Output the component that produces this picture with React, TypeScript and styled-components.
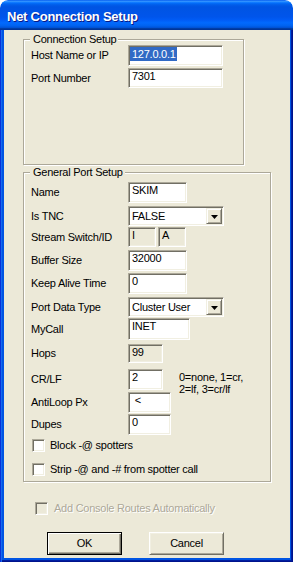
import React from "react";
import styled, { createGlobalStyle, css } from "styled-components";

const Global = createGlobalStyle`
  html, body { margin: 0; padding: 0; background: #ffffff; }
  body { font-family: "Liberation Sans", Arial, sans-serif; }
`;

const UI_FONT = `"Liberation Sans", Arial, sans-serif`;

const Window = styled.div`
  width: 293px;
  height: 562px;
  display: flex;
  flex-direction: column;
  overflow: hidden;
  border-radius: 8px 8px 0 0;
`;

const TitleBar = styled.div`
  height: 30px;
  flex-shrink: 0;
  box-sizing: border-box;
  border-radius: 8px 8px 0 0;
  padding: 9px 0 0 7px;
  background: linear-gradient(
    180deg,
    #0058ee 0%,
    #3593ff 4%,
    #288eff 6%,
    #127dff 8%,
    #036ffc 10%,
    #0262ee 14%,
    #0057e5 20%,
    #0054e3 24%,
    #0055eb 56%,
    #005bf5 66%,
    #026afe 76%,
    #0062ef 86%,
    #0052d6 92%,
    #0040ab 94%,
    #003092 100%
  );
  color: #ffffff;
  font: bold 13px/15px ${UI_FONT};
  letter-spacing: -0.25px;
  text-shadow: 1px 1px #0a1883;
  white-space: nowrap;
`;

const Frame = styled.div`
  flex: 1;
  display: flex;
  padding: 0 3px 4px 4px;
  background: #0054e3;
  box-shadow: inset 1px 0 #0831d9, inset 2px 0 #166aee, inset -1px -1px #00138c,
    inset -2px -2px #001ea0;
`;

const Body = styled.div`
  flex: 1;
  display: flex;
  flex-direction: column;
  align-items: flex-start;
  background: #ece9d8;
  padding: 9px 0 0 19px;
  color: #000000;
  font: 11px/13px ${UI_FONT};
  letter-spacing: -0.25px;
`;

const GroupBox = styled.div<{ $w: number; $h: number; $pt: number; $mt?: number }>`
  position: relative;
  box-sizing: border-box;
  width: ${(p) => p.$w}px;
  height: ${(p) => p.$h}px;
  margin-top: ${(p) => p.$mt ?? 0}px;
  padding: ${(p) => p.$pt}px 0 0 7px;
  border: 1px solid #aca899;
  box-shadow: inset 1px 1px #ffffff, 1px 1px #ffffff;
  display: flex;
  flex-direction: column;
`;

const Legend = styled.span`
  position: absolute;
  top: -7px;
  left: 6px;
  padding: 0 2px 0 3px;
  background: #ece9d8;
  line-height: 13px;
  white-space: nowrap;
`;

const Row = styled.div<{ $h: number; $mt?: number }>`
  display: flex;
  align-items: center;
  height: ${(p) => p.$h}px;
  margin-top: ${(p) => p.$mt ?? 0}px;
`;

const Label = styled.div`
  width: 97px;
  flex-shrink: 0;
  white-space: nowrap;
`;

const sunken = css`
  box-sizing: border-box;
  border: 1px solid;
  border-color: #aca899 #ffffff #ffffff #aca899;
  box-shadow: inset 1px 1px #716f64, inset -1px -1px #f1efe2;
`;

const raised = css`
  box-sizing: border-box;
  border: 1px solid;
  border-color: #f1efe2 #716f64 #716f64 #f1efe2;
  box-shadow: inset 1px 1px #ffffff, inset -1px -1px #aca899;
  background: #ece9d8;
`;

const Field = styled.div<{ $w: number; $disabled?: boolean }>`
  ${sunken}
  width: ${(p) => p.$w}px;
  height: 100%;
  flex-shrink: 0;
  padding: 1px 1px 1px 3px;
  background: ${(p) => (p.$disabled ? "#ece9d8" : "#ffffff")};
  white-space: nowrap;
  overflow: hidden;
  line-height: 13px;
`;

const Selected = styled.span`
  display: inline-block;
  margin-left: -2px;
  padding: 0 1px 0 2px;
  line-height: 14px;
  background: #316ac5;
  color: #ffffff;
`;

const FieldPair = styled.div`
  display: flex;
  gap: 2px;
  height: 100%;
`;

const Combo = styled.div<{ $w: number }>`
  ${sunken}
  width: ${(p) => p.$w}px;
  height: 100%;
  padding: 1px;
  background: #ffffff;
  display: flex;
  align-items: center;
`;

const ComboText = styled.div`
  flex: 1;
  padding-left: 2px;
  white-space: nowrap;
`;

const DropButton = styled.div`
  ${raised}
  width: 16px;
  height: 16px;
  display: flex;
  align-items: center;
  justify-content: center;
  padding-top: 1px;
`;

const Help = styled.div`
  align-self: flex-start;
  margin: 2px 0 0 16px;
  line-height: 12px;
  white-space: nowrap;
`;

const CheckRow = styled.div<{ $mt?: number; $ml: number; $disabled?: boolean }>`
  display: flex;
  align-items: center;
  height: 13px;
  margin-top: ${(p) => p.$mt ?? 0}px;
  margin-left: ${(p) => p.$ml}px;
  gap: ${(p) => (p.$disabled ? 6 : 5)}px;
  white-space: nowrap;
  color: ${(p) => (p.$disabled ? "#aca899" : "#000000")};
  text-shadow: ${(p) => (p.$disabled ? "1px 1px #ffffff" : "none")};
`;

const CheckBox = styled.div<{ $disabled?: boolean }>`
  ${sunken}
  width: 13px;
  height: 13px;
  flex-shrink: 0;
  background: ${(p) => (p.$disabled ? "#ece9d8" : "#ffffff")};
`;

const ButtonRow = styled.div`
  display: flex;
  gap: 27px;
  margin: 17px 0 0 24px;
`;

const Button = styled.button<{ $default?: boolean }>`
  width: 75px;
  height: 23px;
  box-sizing: border-box;
  margin: 0;
  padding: 0;
  background: #ece9d8;
  color: #000000;
  font: 11px/13px ${UI_FONT};
  letter-spacing: -0.25px;
  display: flex;
  align-items: center;
  justify-content: center;
  ${(p) =>
    p.$default
      ? css`
          border: 1px solid #000000;
          box-shadow: inset 1px 1px #ffffff, inset -1px -1px #716f64,
            inset -2px -2px #aca899;
        `
      : css`
          border: 1px solid;
          border-color: #ffffff #716f64 #716f64 #ffffff;
          box-shadow: inset 1px 1px #f1efe2, inset -1px -1px #aca899;
        `}
`;

const Arrow = () => (
  <svg width="7" height="4" viewBox="0 0 7 4">
    <polygon points="0,0 7,0 3.5,4" fill="#000" />
  </svg>
);

export default function App() {
  return (
    <>
      <Global />
      <Window>
        <TitleBar>Net Connection Setup</TitleBar>
        <Frame>
          <Body>
            <GroupBox $w={221} $h={126} $pt={5}>
              <Legend>Connection Setup</Legend>
              <Row $h={21}>
                <Label>Host Name or IP</Label>
                <Field $w={95}>
                  <Selected>127.0.0.1</Selected>
                </Field>
              </Row>
              <Row $h={20} $mt={2}>
                <Label>Port Number</Label>
                <Field $w={95}>7301</Field>
              </Row>
            </GroupBox>

            <GroupBox $w={248} $h={310} $pt={9} $mt={7}>
              <Legend>General Port Setup</Legend>
              <Row $h={21}>
                <Label>Name</Label>
                <Field $w={59}>SKIM</Field>
              </Row>
              <Row $h={20} $mt={3}>
                <Label>Is TNC</Label>
                <Combo $w={96}>
                  <ComboText>FALSE</ComboText>
                  <DropButton>
                    <Arrow />
                  </DropButton>
                </Combo>
              </Row>
              <Row $h={20} $mt={1}>
                <Label>Stream Switch/ID</Label>
                <FieldPair>
                  <Field $w={28} $disabled>
                    I
                  </Field>
                  <Field $w={28} $disabled>
                    A
                  </Field>
                </FieldPair>
              </Row>
              <Row $h={21} $mt={3}>
                <Label>Buffer Size</Label>
                <Field $w={59}>32000</Field>
              </Row>
              <Row $h={21} $mt={2}>
                <Label>Keep Alive Time</Label>
                <Field $w={59}>0</Field>
              </Row>
              <Row $h={20} $mt={3}>
                <Label>Port Data Type</Label>
                <Combo $w={96}>
                  <ComboText>Cluster User</ComboText>
                  <DropButton>
                    <Arrow />
                  </DropButton>
                </Combo>
              </Row>
              <Row $h={22} $mt={1}>
                <Label>MyCall</Label>
                <Field $w={62}>INET</Field>
              </Row>
              <Row $h={19} $mt={4}>
                <Label>Hops</Label>
                <Field $w={35} $disabled>
                  99
                </Field>
              </Row>
              <Row $h={21} $mt={6}>
                <Label>CR/LF</Label>
                <Field $w={35}>2</Field>
                <Help>
                  0=none, 1=cr,
                  <br />
                  2=lf, 3=cr/lf
                </Help>
              </Row>
              <Row $h={21} $mt={2}>
                <Label>AntiLoop Px</Label>
                <Field $w={43}>&nbsp;&lt;</Field>
              </Row>
              <Row $h={21} $mt={1}>
                <Label>Dupes</Label>
                <Field $w={43}>0</Field>
              </Row>
              <CheckRow $mt={4} $ml={1}>
                <CheckBox />
                Block -@ spotters
              </CheckRow>
              <CheckRow $mt={11} $ml={1}>
                <CheckBox />
                Strip -@ and -# from spotter call
              </CheckRow>
            </GroupBox>

            <CheckRow $mt={20} $ml={12} $disabled>
              <CheckBox $disabled />
              Add Console Routes Automatically
            </CheckRow>

            <ButtonRow>
              <Button $default>OK</Button>
              <Button>Cancel</Button>
            </ButtonRow>
          </Body>
        </Frame>
      </Window>
    </>
  );
}
